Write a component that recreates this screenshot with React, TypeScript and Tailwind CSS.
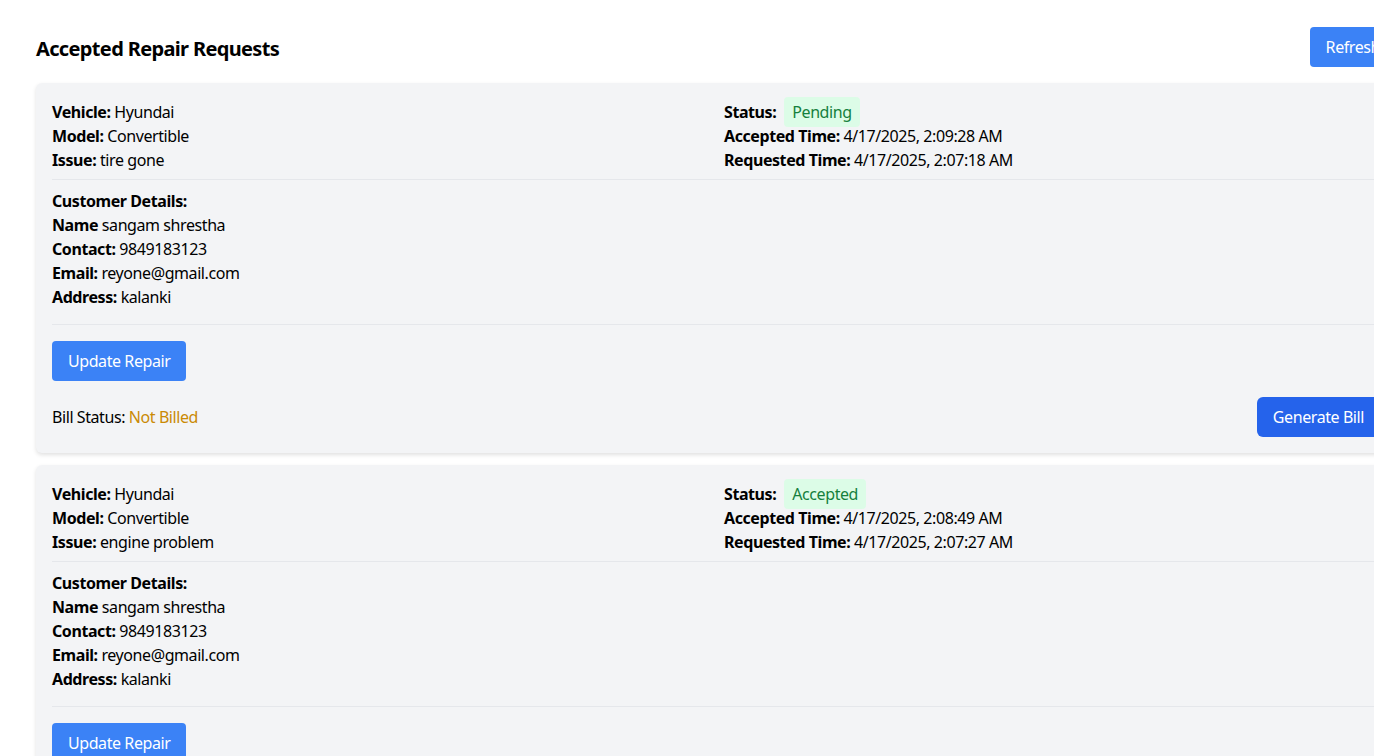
import React from "react";

type Req = {
  issue: string;
  status: string;
  accepted: string;
  requested: string;
};

const reqs: Req[] = [
  { issue: "tire gone", status: "Pending", accepted: "4/17/2025, 2:09:28 AM", requested: "4/17/2025, 2:07:18 AM" },
  { issue: "engine problem", status: "Accepted", accepted: "4/17/2025, 2:08:49 AM", requested: "4/17/2025, 2:07:27 AM" },
];

function Line({ label, value }: { label: string; value: string }) {
  return (
    <p>
      <span className="font-bold">{label}</span> {value}
    </p>
  );
}

function Card({ r }: { r: Req }) {
  return (
    <div className="bg-[#f3f4f6] px-4 pt-[17px] pb-4 rounded-md shadow-[0_2px_4px_rgba(0,0,0,0.12)]">
      <div className="grid grid-cols-2 gap-4">
        <div>
          <Line label="Vehicle:" value="Hyundai" />
          <Line label="Model:" value="Convertible" />
          <Line label="Issue:" value={r.issue} />
        </div>
        <div>
          <p>
            <span className="font-bold">Status:</span>
            <span className="ml-2 px-2 py-1 rounded bg-[#dcfce7] text-[#15803d]">{r.status}</span>
          </p>
          <Line label="Accepted Time:" value={r.accepted} />
          <Line label="Requested Time:" value={r.requested} />
        </div>
      </div>
      <div className="mt-[7px] pt-[9px] border-t border-[#e5e7eb]">
        <p className="font-bold">Customer Details:</p>
        <Line label="Name" value="sangam shrestha" />
        <Line label="Contact:" value="9849183123" />
        <Line label="Email:" value="reyone@gmail.com" />
        <Line label="Address:" value="kalanki" />
      </div>
      <div className="mt-[15px] pt-[16px] border-t border-[#e5e7eb]">
        <button className="bg-[#3b82f6] text-white px-4 py-2 rounded">Update Repair</button>
        <div className="mt-4 flex justify-between items-center">
          <p>
            Bill Status: <span className="text-[#ca8a04]">Not Billed</span>
          </p>
          <button className="bg-[#2563eb] text-white px-4 py-2 rounded-md">Generate Bill</button>
        </div>
      </div>
    </div>
  );
}

export default function App() {
  return (
    <div className="w-screen h-screen overflow-hidden bg-white text-black font-['Noto_Sans',sans-serif] tracking-[-0.42px]">
      <div className="pl-[36px] pt-[27px] w-[1396px]">
        <div className="flex justify-between items-center mb-4">
          <h1 className="text-xl font-bold pt-1 tracking-[-0.65px]">Accepted Repair Requests</h1>
          <button className="bg-[#3b82f6] text-white px-4 py-2 rounded">Refresh</button>
        </div>
        <div className="flex flex-col gap-3">
          {reqs.map((r, i) => (
            <Card key={i} r={r} />
          ))}
        </div>
      </div>
    </div>
  );
}
